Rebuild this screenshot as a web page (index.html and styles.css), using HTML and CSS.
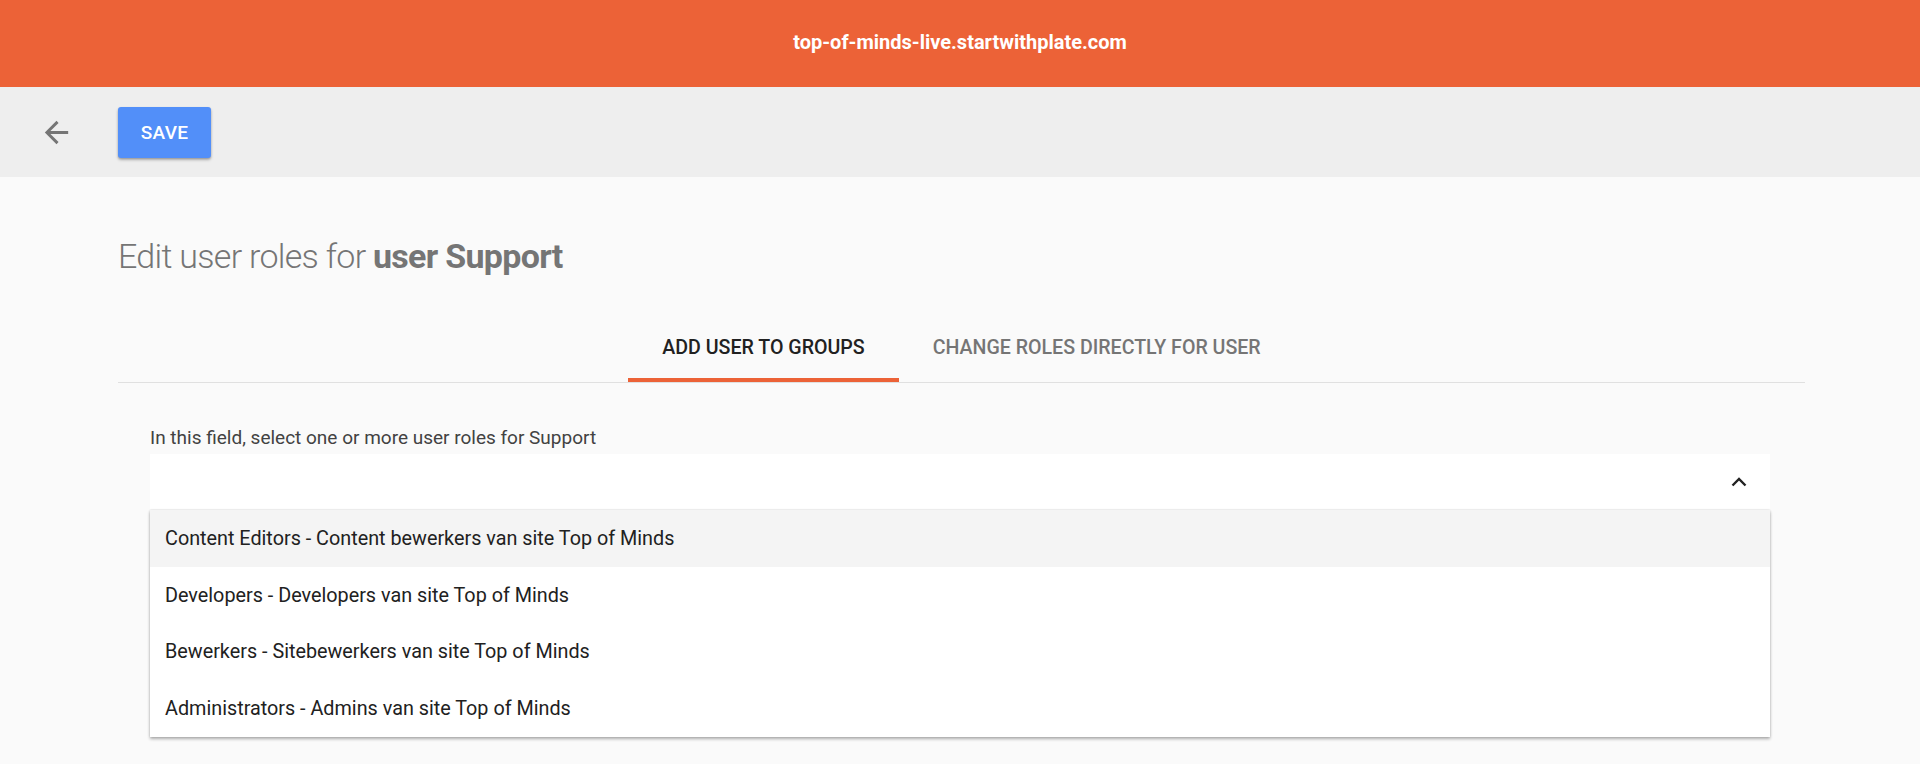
FILE: index.html
```html
<!DOCTYPE html>
<html>
<head>
<meta charset="utf-8">
<link rel="stylesheet" href="styles.css">
</head>
<body>
<header class="site-bar">top-of-minds-live.startwithplate.com</header>
<div class="toolbar">
  <button class="back" aria-label="Back">
    <svg viewBox="0 0 24 24" width="35" height="35"><path d="M20 11H7.83l5.59-5.59L12 4l-8 8 8 8 1.41-1.41L7.83 13H20v-2z" fill="#757575"/></svg>
  </button>
  <button class="save">SAVE</button>
</div>
<main class="content">
  <h1 class="title">Edit user roles for <strong>user Support</strong></h1>
  <nav class="tabs">
    <div class="tab active">ADD USER TO GROUPS</div>
    <div class="tab">CHANGE ROLES DIRECTLY FOR USER</div>
  </nav>
  <section class="field">
    <div class="label">In this field, select one or more user roles for Support</div>
    <div class="select">
      <svg class="chev" viewBox="0 0 16 10" width="16" height="10"><path d="M1.5 8.5L8 2l6.5 6.5" fill="none" stroke="#222" stroke-width="2.4"/></svg>
    </div>
    <ul class="menu">
      <li class="hl">Content Editors - Content bewerkers van site Top of Minds</li>
      <li>Developers - Developers van site Top of Minds</li>
      <li>Bewerkers - Sitebewerkers van site Top of Minds</li>
      <li>Administrators - Admins van site Top of Minds</li>
    </ul>
  </section>
</main>
</body>
</html>
```
FILE: styles.css
```css
* { box-sizing: border-box; }
html, body { margin: 0; padding: 0; }
body {
  background: #fafafa;
  font-family: Roboto, "Liberation Sans", sans-serif;
  height: 764px;
  overflow: hidden;
}
.site-bar {
  height: 87px;
  background: #ec6237;
  color: #fff;
  font-weight: 700;
  font-size: 20px;
  display: flex;
  align-items: center;
  justify-content: center;
  padding-bottom: 4px;
}
.toolbar {
  height: 90px;
  background: #eeeeee;
  display: flex;
  align-items: center;
  padding-left: 39px;
}
.back {
  background: none;
  border: 0;
  padding: 0;
  width: 35px;
  height: 35px;
  display: flex;
  margin-right: 44px;
}
.save {
  width: 93px;
  height: 51px;
  background: #528ff9;
  color: #fff;
  border: 0;
  border-radius: 3px;
  font-family: Roboto, sans-serif;
  font-weight: 500;
  font-size: 19px;
  letter-spacing: 0.3px;
  box-shadow: 0 2px 3px rgba(0,0,0,0.25), 0 1px 2px rgba(0,0,0,0.15);
}
.content {
  padding: 0 115px 0 118px;
}
.title {
  margin: 0;
  padding-top: 57px;
  font-size: 34px;
  font-weight: 300;
  letter-spacing: -0.7px;
  color: #757575;
  line-height: 44px;
}
.title strong { font-weight: 700; }
.tabs {
  margin-top: 40px;
  display: flex;
  justify-content: center;
  border-bottom: 1px solid #e0e0e0;
}
.tab {
  height: 64px;
  padding: 0 34px;
  display: flex;
  align-items: center;
  font-size: 19.6px;
  font-weight: 500;
  color: #757575;
  padding-bottom: 6px;
}
.tab.active {
  color: #212121;
  border-bottom: 4px solid #ec6237;
  padding-bottom: 2px;
  margin-bottom: -1px;
}
.field {
  padding: 0 35px 0 32px;
}
.label {
  margin-top: 43px;
  font-size: 19px;
  color: #424242;
  line-height: 24px;
}
.select {
  margin-top: 4px;
  height: 55px;
  background: #fff;
  display: flex;
  align-items: center;
  justify-content: flex-end;
  padding-right: 23px;
}
.menu {
  list-style: none;
  margin: 1px 0 0;
  padding: 0;
  background: #fff;
  box-shadow: 0 2px 3px rgba(0,0,0,0.3), 0 0 2px rgba(0,0,0,0.12);
}
.menu li {
  height: 56.75px;
  display: flex;
  align-items: center;
  padding-left: 15px;
  font-size: 19.8px;
  color: #212121;
}
.menu li.hl { background: #f4f4f4; }
```
